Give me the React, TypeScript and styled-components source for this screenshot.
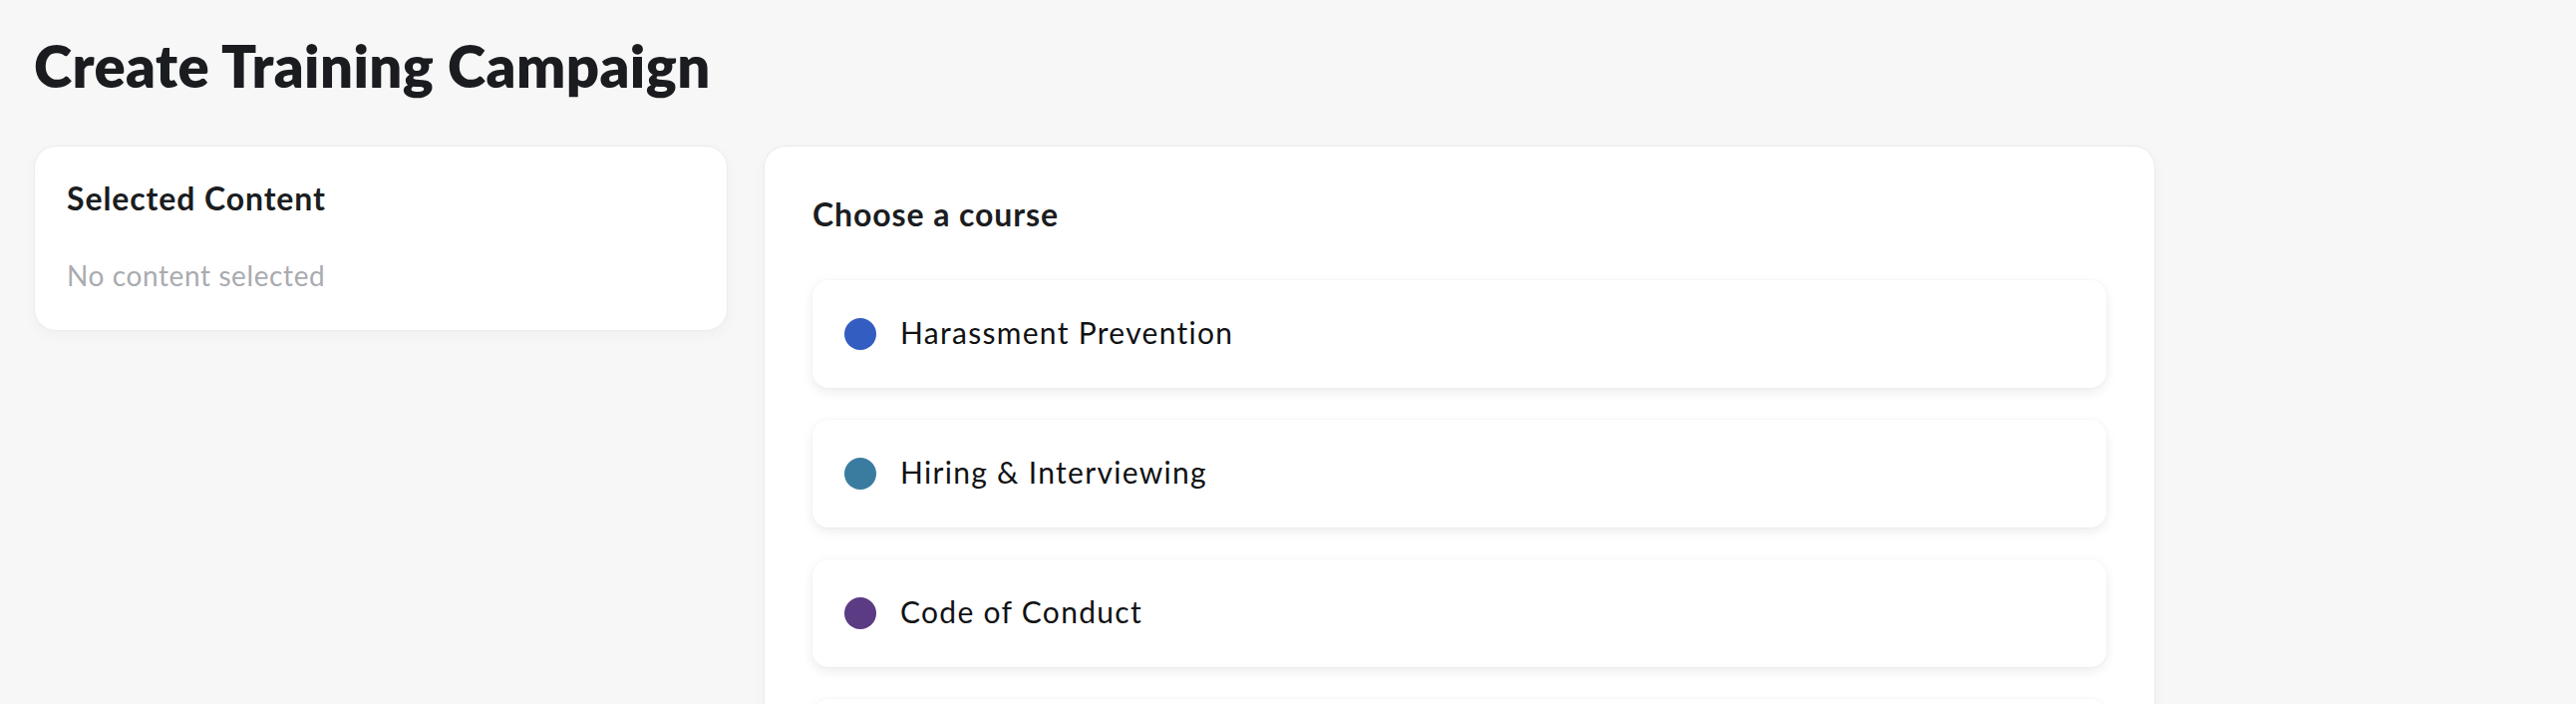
import styled, { createGlobalStyle } from 'styled-components';

const GlobalStyle = createGlobalStyle`
  html, body {
    margin: 0;
    padding: 0;
    background: #f7f7f7;
  }

  body {
    font-family: Lato, 'Noto Sans', sans-serif;
    color: #1b1d21;
  }
`;

type Course = {
  title: string;
  color: string;
};

const courses: Course[] = [
  { title: 'Harassment Prevention', color: '#345dc1' },
  { title: 'Hiring & Interviewing', color: '#3a7c9f' },
  { title: 'Code of Conduct', color: '#5b3b83' },
  { title: 'Diversity & Inclusion', color: '#2f8f6b' },
];

const Page = styled.main`
  min-height: 706px;
  padding: 30px 34px 0;
  box-sizing: border-box;
`;

const PageTitle = styled.h1`
  margin: 0 0 44px;
  font-size: 58px;
  line-height: 72px;
  font-weight: 800;
  letter-spacing: 0.4px;
  color: #1a1c20;
`;

const Columns = styled.div`
  display: flex;
  align-items: flex-start;
  gap: 36px;
`;

const Card = styled.section<{ $width: number; $padding: string }>`
  width: ${({ $width }) => $width}px;
  box-sizing: border-box;
  padding: ${({ $padding }) => $padding};
  background: #fff;
  border: 1px solid #ececec;
  border-radius: 22px;
  box-shadow: 0 4px 14px rgba(0, 0, 0, 0.035);
`;

const CardTitle = styled.h2`
  margin: 0;
  font-size: 32px;
  line-height: 40px;
  font-weight: 700;
  letter-spacing: 0.9px;
  color: #1b1d21;
`;

const EmptyText = styled.p`
  margin: 39px 0 0;
  font-size: 28px;
  line-height: 36px;
  letter-spacing: 0.6px;
  color: #a9abb0;
`;

const CourseList = styled.ul`
  list-style: none;
  margin: 46px 0 0;
  padding: 0;
  display: flex;
  flex-direction: column;
  gap: 32px;
`;

const CourseItem = styled.li`
  height: 108px;
  box-sizing: border-box;
  display: flex;
  align-items: center;
  gap: 24px;
  padding: 0 32px;
  background: #fff;
  border-radius: 16px;
  box-shadow: 0 4px 12px rgba(0, 0, 0, 0.08), 0 0 0 1px rgba(0, 0, 0, 0.015);
  cursor: pointer;
`;

const Dot = styled.span<{ $color: string }>`
  flex: none;
  width: 32px;
  height: 32px;
  border-radius: 50%;
  background: ${({ $color }) => $color};
`;

const CourseName = styled.span`
  font-size: 30px;
  line-height: 36px;
  letter-spacing: 1.3px;
  color: #111214;
  transform: translateY(-2px);
`;

export default function App() {
  return (
    <>
      <GlobalStyle />
      <Page>
        <PageTitle>Create Training Campaign</PageTitle>
        <Columns>
          <Card $width={696} $padding="32px 32px 37px">
            <CardTitle>Selected Content</CardTitle>
            <EmptyText>No content selected</EmptyText>
          </Card>
          <Card $width={1396} $padding="48px">
            <CardTitle>Choose a course</CardTitle>
            <CourseList>
              {courses.map((course) => (
                <CourseItem key={course.title}>
                  <Dot $color={course.color} />
                  <CourseName>{course.title}</CourseName>
                </CourseItem>
              ))}
            </CourseList>
          </Card>
        </Columns>
      </Page>
    </>
  );
}
